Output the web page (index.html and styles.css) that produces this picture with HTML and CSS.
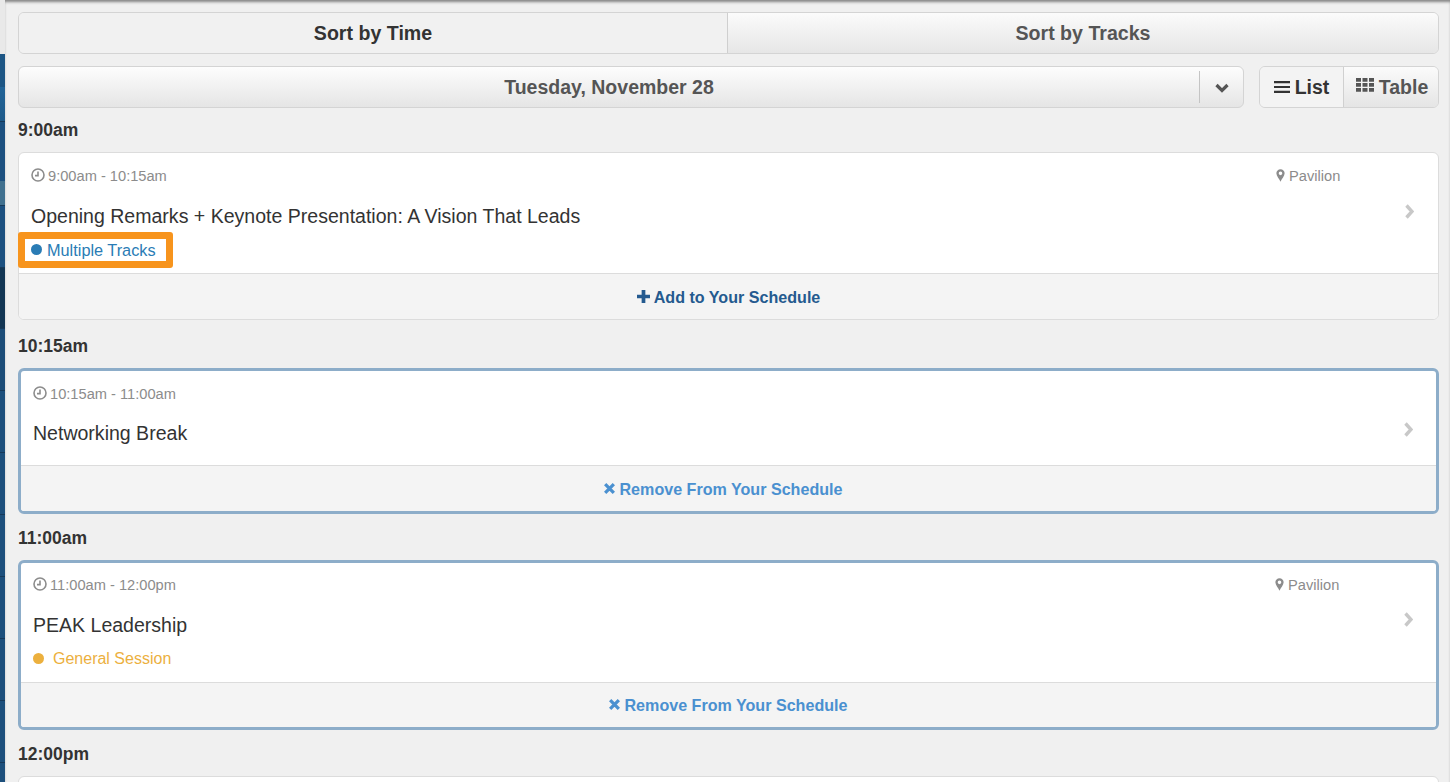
FILE: index.html
```html
<!DOCTYPE html>
<html lang="en">
<head>
<meta charset="utf-8">
<title>Schedule</title>
<link rel="stylesheet" href="styles.css">
</head>
<body>
<div class="page">
  <nav class="rail">
    <div class="band band-top"></div>
    <div class="band band-a"></div>
    <div class="band band-b"></div>
    <div class="band band-c"></div>
    <div class="band band-d"></div>
    <div class="band band-e"></div>
    <div class="band band-f"></div>
    <div class="band band-g"></div>
    <div class="band band-h"></div>
    <div class="band band-h"></div>
    <div class="band band-h"></div>
    <div class="band band-h"></div>
    <div class="band band-h"></div>
    <div class="band band-h"></div>
    <div class="band band-h"></div>
  </nav>
  <main class="main">
    <div class="sort-tabs">
      <div class="sort-tab is-active">Sort by Time</div>
      <div class="sort-tab">Sort by Tracks</div>
    </div>
    <div class="controls">
      <div class="date-select">
        <div class="date-label">Tuesday, November 28</div>
        <div class="date-caret">
          <svg class="caret-icon" viewBox="0 0 14 10"><path d="M1.500 2 7 7.500 12.500 2" /></svg>
        </div>
      </div>
      <div class="view-toggle">
        <div class="view-btn view-list is-active">
          <svg class="list-icon" viewBox="0 0 16 14"><path d="M0 1h16v2.200H0zM0 5.900h16v2.200H0zM0 10.800h16V13H0z"/></svg>
          List
        </div>
        <div class="view-btn view-table">
          <svg class="table-icon" viewBox="0 0 18 14"><path d="M0 0h5v3.800H0zM6.500 0h5v3.800h-5zM13 0h5v3.800h-5zM0 5h5v3.800H0zM6.500 5h5v3.800h-5zM13 5h5v3.800h-5zM0 10h5v3.800H0zM6.500 10h5v3.800h-5zM13 10h5v3.800h-5z"/></svg>
          Table
        </div>
      </div>
    </div>

    <section class="slot slot-plain">
      <h2 class="slot-time">9:00am</h2>
      <article class="card">
        <div class="card-body">
          <div class="meta"><svg class="clock" viewBox="0 0 14 14"><circle cx="7" cy="7" r="6"/><path d="M7 3.600V7.600H4"/></svg>9:00am - 10:15am</div>
          <div class="meta place"><svg class="pin" viewBox="0 0 10 14"><path d="M5 0a4.600 4.600 0 0 0-4.600 4.600C.4 7.400 3.600 11 5 14c1.400-3 4.600-6.600 4.600-9.400A4.600 4.600 0 0 0 5 0zm0 6.600a2 2 0 1 1 0-4 2 2 0 0 1 0 4z"/></svg>Pavilion</div>
          <div class="title">Opening Remarks + Keynote Presentation: A Vision That Leads</div>
          <svg class="chev" viewBox="0 0 10 15"><path d="M2.500 1.500 8 7.500 2.500 13.500"/></svg>
          <div class="tag tag-blue">
            <span class="highlight"></span>
            <span class="dot"></span>Multiple Tracks
          </div>
        </div>
        <div class="card-foot add">
          <svg class="plus" viewBox="0 0 14 14"><path d="M5 0h4v5h5v4H9v5H5V9H0V5h5z"/></svg>Add to Your Schedule
        </div>
      </article>
    </section>

    <section class="slot">
      <h2 class="slot-time">10:15am</h2>
      <article class="card is-added">
        <div class="card-body short">
          <div class="meta"><svg class="clock" viewBox="0 0 14 14"><circle cx="7" cy="7" r="6"/><path d="M7 3.600V7.600H4"/></svg>10:15am - 11:00am</div>
          <div class="title">Networking Break</div>
          <svg class="chev" viewBox="0 0 10 15"><path d="M2.500 1.500 8 7.500 2.500 13.500"/></svg>
        </div>
        <div class="card-foot remove offset">
          <svg class="cross" viewBox="0 0 12 12"><path d="M2 2 10 10M10 2 2 10"/></svg>Remove From Your Schedule
        </div>
      </article>
    </section>

    <section class="slot">
      <h2 class="slot-time">11:00am</h2>
      <article class="card is-added">
        <div class="card-body tight">
          <div class="meta"><svg class="clock" viewBox="0 0 14 14"><circle cx="7" cy="7" r="6"/><path d="M7 3.600V7.600H4"/></svg>11:00am - 12:00pm</div>
          <div class="meta place"><svg class="pin" viewBox="0 0 10 14"><path d="M5 0a4.600 4.600 0 0 0-4.600 4.600C.4 7.400 3.600 11 5 14c1.400-3 4.600-6.600 4.600-9.400A4.600 4.600 0 0 0 5 0zm0 6.600a2 2 0 1 1 0-4 2 2 0 0 1 0 4z"/></svg>Pavilion</div>
          <div class="title">PEAK Leadership</div>
          <svg class="chev" viewBox="0 0 10 15"><path d="M2.500 1.500 8 7.500 2.500 13.500"/></svg>
          <div class="tag tag-gold"><span class="dot dot-wide"></span>General Session</div>
        </div>
        <div class="card-foot remove compact">
          <svg class="cross" viewBox="0 0 12 12"><path d="M2 2 10 10M10 2 2 10"/></svg>Remove From Your Schedule
        </div>
      </article>
    </section>

    <section class="slot">
      <h2 class="slot-time">12:00pm</h2>
      <article class="card card-next"></article>
    </section>
  </main>
</div>
</body>
</html>
```

FILE: styles.css
```css
* { box-sizing: border-box; }

html, body {
  margin: 0;
  height: 100%;
  overflow: hidden;
}

body {
  font-family: "Liberation Sans", Arial, sans-serif;
  color: #333;
  background: #f0f0f0;
}

.page {
  display: flex;
  height: 782px;
  overflow: hidden;
}

/* Left rail */
.rail {
  flex: 0 0 5px;
  display: flex;
  flex-direction: column;
}
.band { flex: none; border-bottom: 1px solid #16395a; }
.band-top { height: 54px; background: #e9e9e9; border-bottom: 0; }
.band-a { height: 33px; background: #1d5685; border-bottom: 0; }
.band-b { height: 35px; background: linear-gradient(#226498, #1e5a8a); }
.band-c { height: 59px; background: #1c5080; border-bottom: 0; }
.band-d { height: 25px; background: #40708f; }
.band-e { height: 62px; background: #1c5080; }
.band-f { height: 61px; background: #123553; }
.band-g { height: 62px; background: #1c4d78; }
.band-h { height: 62px; background: #1d4f7c; }

/* Main panel */
.main {
  flex: 1;
  min-width: 0;
  padding: 12px 11px 0 13px;
  background: #f0f0f0;
  box-shadow: inset 0 3px 3px -1px rgba(0, 0, 0, .45);
}

.sort-tabs {
  display: flex;
  height: 42px;
  border: 1px solid #d4d4d4;
  border-radius: 6px;
  overflow: hidden;
  margin-bottom: 12px;
}
.sort-tab {
  flex: 1;
  display: flex;
  align-items: center;
  justify-content: center;
  font-size: 19.6px;
  font-weight: 700;
  color: #555;
  background: linear-gradient(#fbfbfb, #e6e6e6);
}
.sort-tab.is-active {
  flex: 0 0 709px;
  color: #333;
  background: #f1f1f1;
  border-right: 1px solid #cfcfcf;
}

.controls {
  display: flex;
  gap: 15px;
  margin-bottom: 10px;
}
.date-select {
  flex: 1;
  display: flex;
  align-items: center;
  height: 42px;
  border: 1px solid #d4d4d4;
  border-radius: 6px;
  background: linear-gradient(#fdfdfd, #e5e5e5);
}
.date-label {
  flex: 1;
  text-align: center;
  font-size: 19.5px;
  font-weight: 700;
  color: #555;
}
.date-caret {
  flex: 0 0 44px;
  height: 32px;
  padding-top: 2px;
  display: flex;
  align-items: center;
  justify-content: center;
  border-left: 1px solid #c4c4c4;
}
.caret-icon {
  width: 14px;
  height: 10px;
  fill: none;
  stroke: #555;
  stroke-width: 3.2;
}

.view-toggle {
  flex: 0 0 180px;
  display: flex;
  height: 42px;
  border: 1px solid #d4d4d4;
  border-radius: 6px;
  overflow: hidden;
}
.view-btn {
  display: flex;
  align-items: center;
  justify-content: center;
  gap: 5px;
  font-size: 19.5px;
  font-weight: 700;
  color: #555;
  background: linear-gradient(#fbfbfb, #e5e5e5);
}
.view-btn.is-active {
  color: #333;
  background: #f3f3f3;
  border-right: 1px solid #d0d0d0;
}
.view-list { flex: 0 0 84px; }
.view-table { flex: 1; padding-left: 2px; }
.list-icon { width: 16px; height: 14px; fill: #333; }
.table-icon { width: 18px; height: 14px; fill: #555; margin-top: -4px; }

/* Schedule slots */
.slot { margin-bottom: 12px; }
.slot-plain { margin-bottom: 14px; }
.slot-time {
  margin: 0 0 9px;
  font-size: 17.5px;
  line-height: 25px;
  font-weight: 700;
  color: #333;
}

.card {
  background: #fff;
  border: 1px solid #dcdcdc;
  border-radius: 6px;
}
.card.is-added { border: 3px solid #8dadc9; }
.card-next { height: 40px; }

.card-body {
  display: grid;
  grid-template-columns: 1fr 128px 10px;
  padding: 13px 24px 13px 12px;
}
.is-added .card-body { padding-right: 23px; }
.card-body.short { padding-bottom: 19px; }
.card-body.short .title { margin-top: 16px; }
.card-body.tight { padding-top: 12px; }

.meta {
  display: flex;
  align-items: center;
  font-size: 14.65px;
  line-height: 20px;
  color: #8c8c8c;
}
.place { grid-column: 2 / 4; }
.clock {
  width: 14px;
  height: 14px;
  margin: -3px 3px 0 0;
  fill: none;
  stroke: #8c8c8c;
  stroke-width: 1.6;
}
.pin {
  width: 9px;
  height: 13px;
  margin: -2px 4px 0 0;
  fill: #8c8c8c;
}

.title {
  grid-column: 1 / 3;
  margin-top: 17px;
  font-size: 19.55px;
  line-height: 26px;
  color: #333;
}
.chev {
  grid-column: 3;
  width: 10px;
  height: 15px;
  margin-top: 18px;
  fill: none;
  stroke: #c8c8c8;
  stroke-width: 3.4;
}
.card-body.tight .chev { margin-top: 17px; }

.tag {
  position: relative;
  grid-column: 1 / -1;
  display: flex;
  align-items: center;
  margin-top: 11px;
  line-height: 20px;
}
.tag-blue { color: #2a7cb5; font-size: 16.3px; }
.tag-gold { color: #ecb03e; font-size: 16px; }
.dot {
  flex: none;
  width: 11px;
  height: 11px;
  margin: -2px 5px 0 0;
  border-radius: 50%;
  background: currentColor;
}
.dot-wide { margin-right: 9px; }
.highlight {
  position: absolute;
  left: -13px;
  top: -8px;
  width: 155px;
  height: 36px;
  border: 7px solid #f7941d;
  border-radius: 3px;
}

.card-foot {
  display: flex;
  align-items: center;
  justify-content: center;
  height: 46px;
  padding-top: 2px;
  border-top: 1px solid #dcdcdc;
  border-radius: 0 0 5px 5px;
  background: #f4f4f4;
  font-size: 16.1px;
  font-weight: 700;
}
.is-added .card-foot { border-radius: 0 0 3px 3px; }
.card-foot.compact { height: 45px; padding: 0 2px 0 0; }
.card-foot.offset { padding-right: 12px; }
.add { color: #245a8f; }
.remove { color: #4a90d0; }
.plus {
  width: 13px;
  height: 13px;
  margin: -2px 4px 0 0;
  fill: #245a8f;
}
.cross {
  width: 13px;
  height: 13px;
  margin: -2px 4px 0 0;
  fill: none;
  stroke: #4a90d0;
  stroke-width: 3;
}
```
